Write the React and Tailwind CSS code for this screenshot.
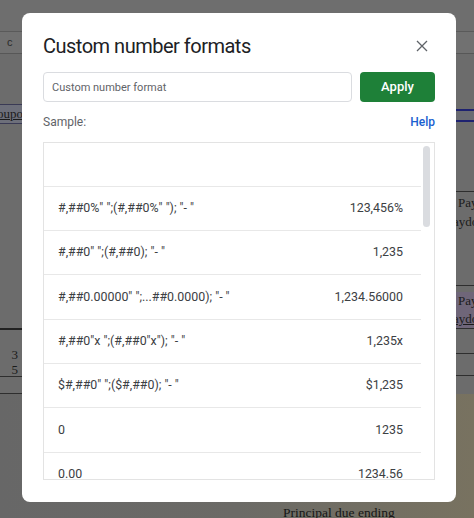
import { useState } from 'react';

const rows = [
  ['#,##0%" ";(#,##0%" "); "- "', '123,456%'],
  ['#,##0" ";(#,##0); "- "', '1,235'],
  ['#,##0.00000" ";...##0.0000); "- "', '1,234.56000'],
  ['#,##0"x ";(#,##0"x"); "- "', '1,235x'],
  ['$#,##0" ";($#,##0); "- "', '$1,235'],
  ['0', '1235'],
  ['0.00', '1234.56'],
];

function CloseIcon() {
  return (
    <svg width="12" height="12" viewBox="0 0 12 12" fill="none" stroke="#5f6368" strokeWidth="1.3">
      <path d="M1 1 L11 11 M11 1 L1 11" />
    </svg>
  );
}

function Sheet() {
  const serif = { fontFamily: '"Liberation Serif", serif' };
  return (
    <div className="flex flex-col w-full h-full bg-[#6c6c6c] text-[13px] text-[#1b1b1b]" style={serif}>
      <div className="h-[32px] shrink-0 border-b border-[#5a5a5a] bg-[#6e6e6e]" />
      <div className="h-[22px] shrink-0 border-b border-[#575757] bg-[#717171] flex items-center">
        <span className="pl-[7px] text-[11px] text-[#2a2a2a] font-['Liberation_Sans',sans-serif]">c</span>
      </div>
      <div className="h-[50px] shrink-0" />
      <div className="h-[20px] shrink-0 flex">
        <div className="w-[24px] bg-[#6d6f7a] border-y border-[#3a3a55] leading-[18px] underline overflow-hidden whitespace-nowrap -indent-[3px]">oupo</div>
        <div className="flex-1" />
        <div className="w-[18px] mt-[5px] h-[13px] border-y-2 border-[#1e2270] bg-[#6a6b72]" />
      </div>
      <div className="h-[67px] shrink-0" />
      <div className="h-[94px] shrink-0 flex">
        <div className="flex-1" />
        <div className="w-[18px] border-t border-[#2e2e2e] pl-[2px] pt-[1px] leading-[19px] overflow-hidden whitespace-nowrap">
          <div>Pay</div>
          <div className="-ml-[5px]">aydo</div>
        </div>
      </div>
      <div className="h-[43px] shrink-0 flex">
        <div className="flex-1" />
        <div className="w-[18px] border-t border-[#2e2e2e] pt-[6px] overflow-hidden whitespace-nowrap">
          <div className="bg-[#6f6679] pl-[2px] leading-[18px] h-[37px]">
            <div>Pay</div>
            <div className="-ml-[5px] underline">aydo</div>
          </div>
        </div>
      </div>
      <div className="h-[48px] shrink-0 flex">
        <div className="w-[24px] border-t-2 border-[#222] pt-[17px] text-right pr-[6px] leading-[15px]">
          <div>3</div>
          <div>5</div>
        </div>
        <div className="flex-1" />
        <div className="w-[18px] border-t border-[#2e2e2e] flex flex-col">
          <div className="h-[25px] border-b border-[#2e2e2e]" />
          <div className="h-[22px] border-b border-[#2e2e2e]" />
        </div>
      </div>
      <div className="h-[18px] shrink-0 flex">
        <div className="w-[24px] border-t border-[#2e2e2e] border-b border-b-[#2e2e2e]" />
      </div>
      <div className="flex-1 bg-gradient-to-r from-[#676767] via-[#6b6a66] to-[#787260] flex items-end">
        <div className="pl-[283px] leading-[14px] text-[13.5px] text-[#161616] h-[12px] whitespace-nowrap">Principal due ending</div>
      </div>
    </div>
  );
}

export default function App() {
  const [value, setValue] = useState('');
  return (
    <div className="relative w-[474px] h-[518px] overflow-hidden font-['Roboto',sans-serif]">
      <Sheet />
      <div className="absolute left-[22px] top-[13px] w-[434px] h-[489px] bg-white rounded-[8px] px-[21px] flex flex-col">
        <div className="mt-[19px] h-[28px] flex items-center justify-between">
          <h1 className="text-[20px] leading-[28px] text-[#202124] tracking-[-0.5px]">Custom number formats</h1>
          <button className="w-[20px] h-[20px] flex items-center justify-center mr-[3px]"><CloseIcon /></button>
        </div>
        <div className="mt-[12px] h-[30px] flex gap-[8px]">
          <input
            value={value}
            onChange={(e) => setValue(e.target.value)}
            placeholder="Custom number format"
            className="flex-1 h-full border border-[#dadce0] rounded-[4px] px-[8px] text-[11px] text-[#202124] placeholder:text-[#5f6368] outline-none"
          />
          <button className="w-[75px] h-full rounded-[4px] bg-[#1e8038] text-white text-[13px] font-medium">Apply</button>
        </div>
        <div className="mt-[8px] h-[24px] flex items-center justify-between text-[12px]">
          <span className="text-[#5f6368]">Sample:</span>
          <a href="#" className="text-[#1a5fd0] font-medium">Help</a>
        </div>
        <div className="mt-[8px] h-[338px] border border-[#e3e3e3] flex overflow-hidden">
          <div className="flex-1 flex flex-col">
            <div className="h-[43.5px] shrink-0 border-b border-[#e8e8e8]" />
            {rows.map(([fmt, sample]) => (
              <div key={fmt} className="h-[44.4px] shrink-0 border-b border-[#e8e8e8] flex items-center justify-between pl-[14px] pr-[18px] text-[12.4px] text-[#3c4043]">
                <span>{fmt}</span>
                <span>{sample}</span>
              </div>
            ))}
          </div>
          <div className="w-[13px] shrink-0 pt-[3px] pl-[2px]">
            <div className="w-[7px] h-[81px] rounded-full bg-[#dadce0]" />
          </div>
        </div>
      </div>
    </div>
  );
}
